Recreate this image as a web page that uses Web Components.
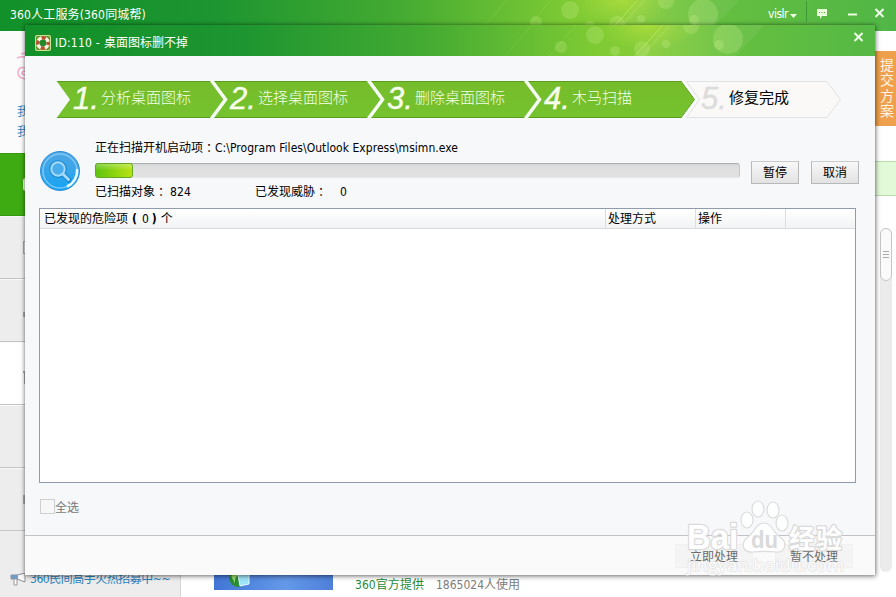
<!DOCTYPE html>
<html lang="zh-CN">
<head>
<meta charset="utf-8">
<title>360人工服务</title>
<style>
    html, body { margin: 0; height: 100%; overflow: hidden; }
    body {
        font-family: "DejaVu Sans Condensed", "Noto Sans CJK SC", sans-serif;
        font-size: 12px;
        color: #000;
        background: #fff;
    }
</style>
</head>
<body>
<app-window>
    <scan-dialog></scan-dialog>
</app-window>

<script>
// Crea el shadow root y mete el contenido
class BaseElement extends HTMLElement {
    constructor() {
        super();
        this.attachShadow({ mode: 'open' });
    }
    render(html) {
        this.shadowRoot.innerHTML = html;
    }
}

// Texto en una linea que se ajusta a un ancho fijo
class UiText extends BaseElement {
    connectedCallback() {
        this.render(`
            <style>
                :host { display: inline-block; white-space: nowrap; line-height: 16px; }
                :host([punct]) { font-family: "Noto Sans CJK TC", sans-serif; }
                span { display: inline-block; }
            </style>
            <span>${this.getAttribute('text')}</span>
        `);
        const width = Number(this.getAttribute('w'));
        if (width) {
            const span = this.shadowRoot.querySelector('span');
            const real = span.getBoundingClientRect().width;
            span.style.letterSpacing = (width - real) / this.getAttribute('text').length + 'px';
            this.style.width = width + 'px';
        }
    }
}

// Barra verde con circulos y diagonales
class GreenBar extends BaseElement {
    connectedCallback() {
        this.render(`
            <style>
                :host { display: grid; height: 31px; overflow: hidden; flex: none; }
                svg, .content { grid-area: 1 / 1; }
                .content { display: flex; align-items: center; min-width: 0; z-index: 1; color: #fff; }
            </style>
            <svg width="896" height="31">
                <defs>
                    <linearGradient id="g">
                        <stop offset="0" stop-color="#129029"/>
                        <stop offset=".24" stop-color="#1d9530"/>
                        <stop offset=".45" stop-color="#45ab32"/>
                        <stop offset=".64" stop-color="#7fcb34"/>
                        <stop offset=".7" stop-color="#86cc3a"/>
                        <stop offset=".8" stop-color="#64bf40"/>
                        <stop offset="1" stop-color="#50b646"/>
                    </linearGradient>
                    <radialGradient id="r">
                        <stop offset="0" stop-color="#c3e83f" stop-opacity=".55"/>
                        <stop offset="1" stop-color="#b4e03c" stop-opacity="0"/>
                    </radialGradient>
                </defs>
                <rect width="896" height="31" fill="url(#g)"/>
                <ellipse cx="622" cy="0" rx="52" ry="26" fill="url(#r)"/>
                <path d="M641 0 613 31H711L739 0Z" fill="#fff" opacity=".06"/>
                <g stroke="#d5f38d" stroke-opacity=".55" fill="none">
                    <path d="M638 0 610 31"/>
                    <path d="M645 0 617 31" opacity=".5"/>
                    <path d="M480 31 507 0M524 31 551 0" opacity=".25"/>
                </g>
                <g fill="#e2f8a6" fill-opacity=".2">
                    <circle cx="703" cy="14" r="15"/>
                    <circle cx="694" cy="20" r="5"/>
                    <circle cx="666" cy="1" r="8"/>
                    <circle cx="641" cy="19" r="4"/>
                    <circle cx="617" cy="24" r="8"/>
                    <circle cx="570" cy="10" r="9"/>
                    <circle cx="536" cy="22" r="6"/>
                    <circle cx="590" cy="26" r="5"/>
                </g>
            </svg>
            <div class="content"><slot></slot></div>
        `);
    }
}

// Iconos pequeños
const ICONS = {
    min: '<svg width="11" height="12"><path d="M1 6.500h9" stroke="#eaffdf" stroke-width="2"/></svg>',
    close: '<svg width="11" height="12"><path d="M1.500 2l8 8M9.500 2l-8 8" stroke="#f0ffe8" stroke-width="2"/></svg>',
    chat: '<svg width="12" height="12"><path d="M1 1h10v7H6L4 11V8H1z" fill="#e9ffdc"/><path d="M3 4.500h1m1.500 0h1m1.500 0h1" stroke="#58ad3d"/></svg>',
    caret: '<svg width="7" height="4"><path d="M0 0h7L3.500 4z" fill="#f2ffe9"/></svg>',
    ring: `<svg width="16" height="16" viewBox="0 0 16 16">
            <rect width="16" height="16" rx="2" fill="#cde28e"/>
            <rect x="1" y="1" width="14" height="14" rx="2" fill="#5d8f27"/>
            <circle cx="8" cy="8" r="5.200" fill="#1f8b2b" stroke="#f8f2df" stroke-width="3.600"/>
            <circle cx="8" cy="8" r="5.200" fill="none" stroke="#b3522d" stroke-width="3.600" stroke-dasharray="4.080 4.090" stroke-dashoffset="2.040"/>
        </svg>`,
    lens: `<svg width="40" height="40" viewBox="0 0 40 40">
            <defs><linearGradient id="b" x2="0" y2="1">
                <stop offset="0" stop-color="#4fa5e3"/><stop offset=".5" stop-color="#36a5ea"/><stop offset="1" stop-color="#12a4f3"/>
            </linearGradient></defs>
            <circle cx="20" cy="20" r="19.500" fill="url(#b)" stroke="#2e8fd6"/>
            <circle cx="20" cy="20" r="17" fill="none" stroke="#8fd0f8" stroke-width="1.500" opacity=".8"/>
            <path d="M37 18A17 17 0 0 1 27 35.500" fill="none" stroke="#e3faff" stroke-width="2.500"/>
            <circle cx="18" cy="18" r="6.700" fill="#4bb0ee" stroke="#1685cc" stroke-width="4"/>
            <path d="M23 23l6 6" stroke="#1685cc" stroke-width="5" stroke-linecap="round"/>
            <circle cx="18" cy="18" r="6.700" fill="#49aceb" stroke="#a3dbfa" stroke-width="2"/>
            <path d="M23 23l5.500 5.500" stroke="#a3dbfa" stroke-width="3" stroke-linecap="round"/>
        </svg>`,
    horn: `<svg width="17" height="14" viewBox="0 0 17 14">
            <path d="M1 2h6l8-2v9L7 6H1z" fill="#f8f8f8" stroke="#8b8f93"/>
            <path d="M1 2h7v4H1z" fill="#6f9bc8"/>
            <path d="M4 6h3v6H4z" fill="#fff" stroke="#999"/>
        </svg>`,
    curl: `<svg width="8" height="28" viewBox="0 0 8 28" fill="none" stroke="#f2abcc" stroke-width="1.500">
            <path d="M8 1L4 2M0 6q4-2 8-1M8 16Q2 14 1 20q0 5 4 6l3 1M8 19q-3 0-3 3l3 1"/>
        </svg>`
};

class UiIcon extends BaseElement {
    connectedCallback() {
        this.render(`
            <style>:host { display: inline-block; flex: none; } svg { display: block; }</style>
            ${ICONS[this.getAttribute('name')]}
        `);
    }
}

// Un paso del asistente
class WizardStep extends BaseElement {
    connectedCallback() {
        const num = this.getAttribute('num');
        const pending = this.hasAttribute('pending');
        const end = this.hasAttribute('end');
        let shape;
        if (pending) {
            shape = '<path d="M1.500 .5H142L155.500 18.500 142 36.500H1.500L14.500 18.500Z" fill="#faf9f7" stroke="#e2e2e2"/>';
        } else {
            shape = `
                <path d="M0 .5H153L166.500 18.500 153 36.500H0L13 18.500Z" fill="url(#s)"/>
                <path d="M0 .5H153M0 36.500H153" stroke="#5a9d1d"/>
                <path d="M153 0L166.500 18.500 153 37" fill="none" stroke="#5a9d1d"/>
                <path d="M154.500 -.5L168.500 18.500 154.500 37.500" fill="none" stroke="${end ? '#f8fbf7' : '#f5fff0'}" stroke-width="${end ? 2 : 3.5}"/>`;
        }
        this.render(`
            <style>
                :host { display: grid; width: 157px; height: 37px; flex: none; }
                svg, .row { grid-area: 1 / 1; }
                svg { display: block; overflow: visible; }
                .row { display: flex; z-index: 1; color: ${pending ? '#000' : '#f4ffe6'}; }
                .num {
                    width: 28px; padding-left: 16px; flex: none;
                    font: italic 31px/35px "Liberation Sans", sans-serif;
                    color: ${pending ? '#dcdcdc' : '#f8ffed'};
                    -webkit-text-stroke: .4px;
                }
                .label {
                    font-family: "Noto Sans CJK SC", sans-serif;
                    font-size: 15px; font-weight: ${pending ? 400 : 300}; line-height: 31px; white-space: nowrap;
                }
            </style>
            <svg width="157" height="37">
                <defs><linearGradient id="s" x2="0" y2="1">
                    <stop offset="0" stop-color="#76bc2b"/><stop offset="1" stop-color="#74c32e"/>
                </linearGradient></defs>
                ${shape}
            </svg>
            <div class="row"><span class="num">${num}.</span><span class="label"><slot></slot></span></div>
        `);
        // Los anteriores quedan por encima del siguiente
        this.style.zIndex = 10 - Number(num);
    }
}

class UiButton extends BaseElement {
    connectedCallback() {
        this.render(`
            <style>
                :host {
                    display: flex; align-items: center; justify-content: center;
                    box-sizing: border-box; width: 48px; height: 23px; flex: none;
                    border: 1px solid #b6b8ba; border-top-color: #c9cacc;
                    background: linear-gradient(#f8f8f8, #e2e2e2);
                    line-height: 16px;
                }
                :host([disabled]) {
                    width: 78px; height: 24px; padding-top: 2px;
                    border-color: #f1f1f1; background: #f4f4f4; color: #6a6a6a;
                }
            </style>
            <slot></slot>
        `);
    }
}

class ScanProgress extends BaseElement {
    connectedCallback() {
        this.render(`
            <style>
                :host {
                    display: block; box-sizing: border-box; height: 15px; border-radius: 3px;
                    background: linear-gradient(#d6d7d8, #dfdfdf 30%, #e2e2e2);
                    border-top: 1px solid #adadae; border-right: 1px solid #c6c6c6; border-bottom: 1px solid #e8e8e8;
                }
                div {
                    box-sizing: border-box; width: ${this.getAttribute('value')}px; height: 15px; margin-top: -1px;
                    border: 1px solid #62a820; border-radius: 3px;
                    background: linear-gradient(rgba(255,255,255,.3), rgba(255,255,255,0) 50%), linear-gradient(90deg, #5ec40d, #b7e312);
                }
            </style>
            <div></div>
        `);
    }
}

class ThreatList extends BaseElement {
    connectedCallback() {
        this.render(`
            <style>
                :host {
                    display: block; box-sizing: border-box; height: 275px;
                    border: 1px solid #8e9cab; background: #fff;
                }
                .head {
                    display: grid; grid-template-columns: 566px 90px 90px 1fr; height: 19px;
                    background: linear-gradient(#fff, #f2f3f4); border-bottom: 1px solid #d9dadb;
                }
                .head div { border-right: 1px solid #dcdddf; padding-left: 2px; line-height: 21px; height: 19px; display: flex; }
                .head div:first-child { padding-left: 4px; }
                .head div:last-child { border: 0; }
                ui-text { margin-top: 2px; }
            </style>
            <div class="head">
                <div>
                    <ui-text text="已发现的危险项" w="84"></ui-text>
                    <ui-text text="(" style="margin-left:4px;font-weight:bold"></ui-text>
                    <ui-text text="0" style="margin-left:5px"></ui-text>
                    <ui-text text=")" style="margin-left:3px;font-weight:bold"></ui-text>
                    <ui-text text="个" style="margin-left:4px"></ui-text>
                </div>
                <div>处理方式</div>
                <div>操作</div>
                <div></div>
            </div>
        `);
    }
}

// Marca de agua sobre el pie
class WaterMark extends BaseElement {
    connectedCallback() {
        this.render(`
            <style>
                :host { position: absolute; left: 660px; top: 473px; pointer-events: none; }
                svg { display: block; }
            </style>
            <svg width="190" height="82" viewBox="0 0 190 82">
                <g fill="#fff" fill-opacity=".9" stroke="#dcdcdd" stroke-width="1.200">
                    <ellipse cx="62" cy="22" rx="6" ry="8"/>
                    <ellipse cx="73" cy="11" rx="6" ry="8"/>
                    <ellipse cx="88" cy="12" rx="6" ry="8"/>
                    <ellipse cx="97" cy="25" rx="6" ry="8"/>
                    <path d="M79 25c8 0 9 10 17 15 6 4 5 15-5 14-8-1-15-1-23 0-11 1-12-9-6-14 8-6 9-15 17-15z"/>
                </g>
                <g font-family="Liberation Sans, sans-serif" font-weight="bold" paint-order="stroke" stroke-linejoin="round">
                    <text x="2" y="51" font-size="35" textLength="51" lengthAdjust="spacingAndGlyphs" fill="#fff" stroke="#dadadb" stroke-width="2.500">Bai</text>
                    <text x="66" y="50" font-size="23" textLength="27" lengthAdjust="spacingAndGlyphs" fill="#dadada">du</text>
                    <text x="104" y="50" font-family="Noto Sans CJK SC" font-size="26" textLength="53" fill="#fff" stroke="#dadadb" stroke-width="2.500">经验</text>
                    <text x="2" y="73" font-family="Open Sans" font-weight="normal" font-size="17" textLength="157" lengthAdjust="spacingAndGlyphs" fill="#fff" stroke="#dedede" stroke-width="1.500" opacity=".75">jingyan.baidu.com</text>
                </g>
            </svg>
        `);
    }
}

class ScanDialog extends BaseElement {
    connectedCallback() {
        this.render(`
            <style>
                :host {
                    position: absolute; left: 25px; top: 25px; width: 850px; height: 550px;
                    display: flex; flex-direction: column; background: #f6f8fa;
                    box-shadow: 0 0 4px rgba(0,0,0,.5), 1px 2px 5px rgba(0,0,0,.25);
                }
                .title { box-sizing: border-box; width: 850px; display: flex; align-items: center; padding: 4px 11px 0 10px; }
                .close { margin: -12px 0 0 auto; }
                .steps { display: flex; margin: 25px 0 0 32px; }
                .scan { display: grid; grid-template-columns: 40px 660px 71px 48px; margin: 21px 0 0 15px; height: 60px; }
                .scan > ui-icon { margin-top: 12px; }
                .info { margin-left: 15px; }
                .line { display: flex; height: 16px; padding-top: 1px; }
                scan-progress { margin: 7px 0 5px; }
                ui-button { margin-top: 22px; }
                .first { margin-left: 11px; }
                threat-list { margin: 9px 19px 0 14px; }
                .all { display: flex; align-items: center; height: 15px; margin: 16px 0 0 15px; color: #777; }
                .box { box-sizing: border-box; width: 15px; height: 15px; border: 1px solid #cfcfcf; background: #f7f7f7; }
                .foot {
                    display: flex; gap: 22px; justify-content: flex-end; margin-top: auto; height: 39px;
                    padding-right: 22px; background: #fafafa; border-top: 1px solid #c2c2c6;
                }
                .foot ui-button { margin-top: 8px; }
            </style>
            <green-bar>
                <div class="title">
                    <ui-icon name="ring"></ui-icon>
                    <ui-text text="ID:110 -" w="45" style="margin-left:4px"></ui-text>
                    <ui-text text="桌面图标删不掉" w="84" style="margin-left:4px"></ui-text>
                    <ui-icon class="close" name="close"></ui-icon>
                </div>
            </green-bar>
            <div class="steps">
                <wizard-step num="1">分析桌面图标</wizard-step>
                <wizard-step num="2">选择桌面图标</wizard-step>
                <wizard-step num="3">删除桌面图标</wizard-step>
                <wizard-step num="4" end>木马扫描</wizard-step>
                <wizard-step num="5" pending>修复完成</wizard-step>
            </div>
            <div class="scan">
                <ui-icon name="lens"></ui-icon>
                <div class="info">
                    <div class="line">
                        <ui-text text="正在扫描开机启动项" w="108"></ui-text><ui-text punct text="：" w="12"></ui-text>
                        <ui-text text="C:\\Program Files\\Outlook Express\\msimn.exe" w="243"></ui-text>
                    </div>
                    <scan-progress value="38"></scan-progress>
                    <div class="line">
                        <ui-text text="已扫描对象" w="60"></ui-text><ui-text punct text="：" w="12"></ui-text>
                        <ui-text text="824" w="21" style="margin-left:3px"></ui-text>
                        <ui-text text="已发现威胁" w="60" style="margin-left:64px"></ui-text><ui-text punct text="：" w="12"></ui-text>
                        <ui-text text="0" w="7" style="margin-left:13px"></ui-text>
                    </div>
                </div>
                <ui-button class="first">暂停</ui-button>
                <ui-button>取消</ui-button>
            </div>
            <threat-list></threat-list>
            <div class="all"><span class="box"></span>全选</div>
            <div class="foot">
                <ui-button disabled>立即处理</ui-button>
                <ui-button disabled>暂不处理</ui-button>
            </div>
            <water-mark></water-mark>
        `);
    }
}

// Barra lateral de la ventana principal
class SideMenu extends BaseElement {
    connectedCallback() {
        this.render(`
            <style>
                :host { display: flex; flex-direction: column; width: 180px; background: #ededed; border-right: 1px solid #d6d6d6; }
                .user { height: 122px; flex: none; background: #fbfbfb; color: #2b83bd; box-sizing: border-box; padding: 21px 0 0 17px; line-height: 20px; }
                .user ui-icon { display: block; margin-bottom: 22px; }
                .item { box-sizing: border-box; height: 63px; flex: none; border-bottom: 1px solid #c4c4c4; border-top: 1px solid #f8f8f8; padding-left: 23px; display: flex; align-items: center; }
                .item i { width: 8px; height: 13px; border: 1px solid #aaa; box-sizing: border-box; }
                .on { background: #3eab12; border-color: #36980d; }
                .on i { border: 2px solid #eaffdf; border-radius: 3px; }
                .white { background: #fff; }
                .ad { display: flex; gap: 3px; padding: 34px 0 0 10px; color: #2b83bd; }
                .ad ui-icon { margin-top: 8px; }
                .ad ui-text { margin-top: 6px; }
            </style>
            <div class="user"><ui-icon name="curl"></ui-icon>我的<br>我的</div>
            <div class="item on"><i></i></div>
            <div class="item"><i></i></div>
            <div class="item"><i style="border-width:0 0 2px 2px;height:5px;margin-top:8px"></i></div>
            <div class="item white"><i style="border-width:2px 2px 0 0;width:3px;margin-top:8px"></i></div>
            <div class="item"></div>
            <div class="item"><i style="border-width:0 0 3px 3px;height:9px"></i></div>
            <div class="ad"><ui-icon name="horn"></ui-icon><ui-text text="360民间高手火热招募中~~" w="140"></ui-text></div>
        `);
    }
}

class SideTab extends BaseElement {
    connectedCallback() {
        this.render(`
            <style>
                :host {
                    display: flex; justify-content: center; box-sizing: border-box; width: 21px; height: 75px; padding-top: 7px;
                    background: #efa04c; color: #fff4e2; font-size: 14px; line-height: 15.300px; text-align: center;
                }
                span { width: 14px; margin-left: 3px; }
            </style>
            <span><slot></slot></span>
        `);
    }
}

class ScrollTrack extends BaseElement {
    connectedCallback() {
        this.render(`
            <style>
                :host { display: block; width: 12px; height: 344px; border-radius: 6px; background: #ebebeb; }
                div {
                    box-sizing: border-box; height: 53px; border: 1px solid #c6c6c6; border-radius: 6px; background: #fafafa;
                    display: flex; flex-direction: column; align-items: center; justify-content: center; gap: 2px;
                }
                i { width: 6px; height: 1px; background: #aaa; }
            </style>
            <div><i></i><i></i><i></i></div>
        `);
    }
}

class AppWindow extends BaseElement {
    connectedCallback() {
        this.render(`
            <style>
                :host { display: flex; flex-direction: column; position: relative; width: 896px; height: 597px; background: #fff; overflow: hidden; }
                .bar { display: flex; align-items: center; width: 896px; height: 27px; align-self: flex-start; }
                .bar > ui-text:first-child { margin: 2px auto 0 10px; }
                .sep { width: 1px; height: 21px; background: #3f9a35; margin: -4px 9px 0 9px; }
                .main { display: flex; flex: 1; min-height: 0; }
                .page { flex: 1; display: flex; flex-direction: column; justify-content: flex-end; }
                .row { display: flex; align-items: flex-end; padding: 0 0 4px 33px; }
                .thumb { width: 119px; height: 32px; margin: 0 22px 3px 0; background: linear-gradient(90deg, #4176d6, #6498e8 60%, #4e80da); }
                .thumb svg { display: block; }
                .right { width: 21px; display: flex; flex-direction: column; align-items: flex-end; padding-top: 20px; }
                .band { box-sizing: border-box; width: 21px; height: 35px; margin: 35px 0 32px; background: #e3fad9; border: 1px solid #b9dcae; border-width: 1px 0; }
                scroll-track { margin-right: 4px; }
            </style>
            <green-bar>
                <div class="bar">
                    <ui-text text="360人工服务(360同城帮)" w="136"></ui-text>
                    <ui-text text="vislr" w="20"></ui-text>
                    <ui-icon name="caret" style="margin:5px 0 0 2px"></ui-icon>
                    <span class="sep"></span>
                    <ui-icon name="chat"></ui-icon>
                    <ui-icon name="min" style="margin-left:19px"></ui-icon>
                    <ui-icon name="close" style="margin:-2px 11px 0 16px"></ui-icon>
                </div>
            </green-bar>
            <div class="main">
                <side-menu></side-menu>
                <div class="page">
                    <div class="row">
                        <div class="thumb"><svg width="119" height="32">
                            <circle cx="24" cy="20" r="9" fill="#2b8d35"/><path d="M17 18q4-5 8-1-5 2-4 8z" fill="#9adf70"/>
                            <path d="M24 17l11-1v10l-9 2z" fill="#9ee5fa" stroke="#e7fbff"/>
                        </svg></div>
                        <ui-text text="360官方提供" w="69" style="color:#288a35"></ui-text>
                        <ui-text text="1865024人使用" w="84" style="color:#7c7c7c;margin-left:12px"></ui-text>
                    </div>
                </div>
                <div class="right">
                    <side-tab>提交方案</side-tab>
                    <div class="band"></div>
                    <scroll-track></scroll-track>
                </div>
            </div>
            <slot></slot>
        `);
    }
}

customElements.define('ui-text', UiText);
customElements.define('ui-icon', UiIcon);
customElements.define('green-bar', GreenBar);
customElements.define('wizard-step', WizardStep);
customElements.define('ui-button', UiButton);
customElements.define('scan-progress', ScanProgress);
customElements.define('threat-list', ThreatList);
customElements.define('water-mark', WaterMark);
customElements.define('side-menu', SideMenu);
customElements.define('side-tab', SideTab);
customElements.define('scroll-track', ScrollTrack);
customElements.define('scan-dialog', ScanDialog);
customElements.define('app-window', AppWindow);
</script>
</body>
</html>
